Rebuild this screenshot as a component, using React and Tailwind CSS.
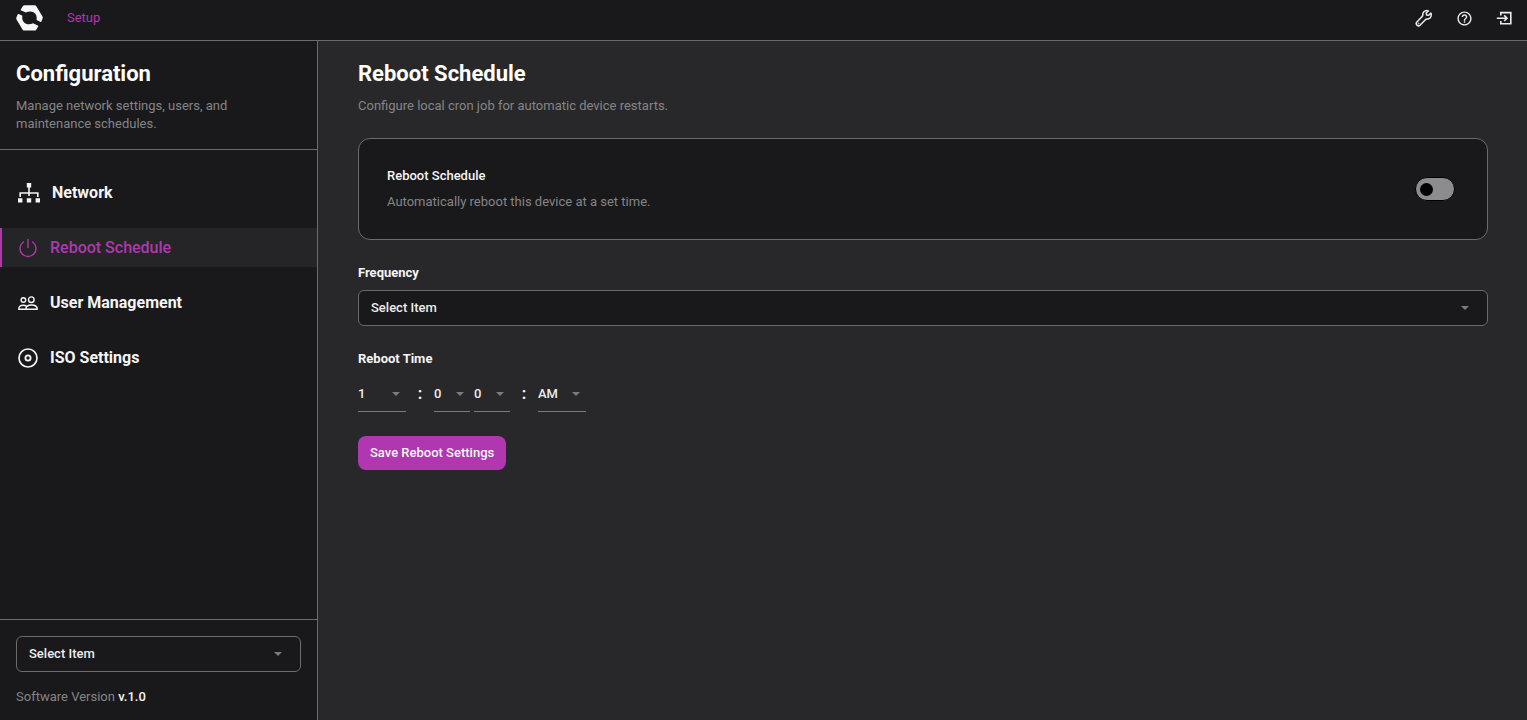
import React, { useState } from 'react';
import { MdHelpOutline } from 'react-icons/md';

const Logo = () => (
  <svg viewBox="0 0 27 26" className="h-[26px] w-[27px]" fill="#f7f7f7" aria-hidden="true">
    <path d="M4.8 4.4 6.6 1.4Q7.4.2 8.8.2H18.4Q19.8.2 20.5 1.4L26.5 11.4Q27 12.4 26.6 13.4L25.4 16.4Q25 17.2 24.2 16.8L20.6 15C21.2 11 19.6 8.2 17 7.1 14.6 6.1 12 6.5 10 7.6L5.2 5.6Q4.4 5.2 4.8 4.4Z" />
    <path d="M2.8 9 6.4 10.8C5.6 14.8 7.4 17.6 10 18.7 12.4 19.7 15 19.3 17 18.2L21.8 20.4Q22.6 20.8 22.2 21.6L20.4 24.4Q19.6 25.6 18.2 25.6H8.6Q7.2 25.6 6.5 24.4L.5 14.4Q0 13.4.4 12.4L1.6 9.6Q2 8.6 2.8 9Z" />
  </svg>
);

const WrenchIcon = () => (
  <svg viewBox="0 0 18 18" className="size-[18px]" fill="none" stroke="currentColor" strokeWidth="1.5" strokeLinejoin="round" aria-hidden="true">
    <path d="M15.9 4.1 13.6 6.2 11.5 5.9 11.2 4 13.4 1.9C11.4 1.1 8.8 2 8 4.2 7.6 5.4 7.8 6.2 7.6 7L1.9 12.9A2.3 2.3 0 0 0 5.2 16.1L10.9 10.2C11.8 9.9 12.6 10.2 13.7 9.8 15.9 9 16.8 6.3 15.9 4.1Z" />
    <circle cx="3.7" cy="14.4" r=".5" strokeWidth=".8" />
  </svg>
);

const EnterIcon = () => (
  <svg viewBox="0 0 16 16" className="size-4" fill="none" stroke="currentColor" strokeWidth="1.6" aria-hidden="true">
    <path d="M4.8 5.4V2.6H14.8V13.8H4.8V11M.8 8.2H11M8.2 5.4 11 8.2 8.2 11" />
  </svg>
);

const NetworkIcon = () => (
  <svg viewBox="0 0 22 20" className="h-5 w-[22px]" aria-hidden="true">
    <path d="M11 4V13M2.2 14V10H19.8V14" fill="none" stroke="currentColor" strokeWidth="1.6" />
    <path d="M8.8 0h4.4v4.4H8.8zM0 15.2h4.4v4.4H0zM8.8 15.2h4.4v4.4H8.8zM17.6 15.2H22v4.4h-4.4z" fill="currentColor" />
  </svg>
);

const PowerIcon = () => (
  <svg viewBox="0 0 20 20" className="size-5" fill="none" stroke="currentColor" strokeWidth="1.4" strokeLinecap="round" aria-hidden="true">
    <path d="M10 1.5V9.5M5.4 4A8 8 0 1 0 14.6 4" />
  </svg>
);

const PeopleIcon = () => (
  <svg viewBox="0 0 20 20" className="size-5" fill="none" stroke="currentColor" strokeWidth="1.4" strokeLinejoin="round" aria-hidden="true">
    <circle cx="5.4" cy="7" r="2.3" />
    <circle cx="13.3" cy="6.7" r="2.8" />
    <path d="M7.8 16.3H19.3C19.3 13.7 17 12 13.5 12S7.8 13.7 7.8 16.3ZM7.6 16.3H.7C.7 13.7 2.4 12.2 5.2 12.2 6.6 12.2 7.7 12.5 8.5 13.1" />
  </svg>
);

const DiscIcon = () => (
  <svg viewBox="0 0 20 20" className="size-5" fill="none" stroke="currentColor" aria-hidden="true">
    <circle cx="10" cy="10" r="9" strokeWidth="1.7" />
    <circle cx="10" cy="10" r="2.6" strokeWidth="1.8" />
  </svg>
);

const navItems = [
  { label: 'Network', icon: <NetworkIcon /> },
  { label: 'Reboot Schedule', icon: <PowerIcon /> },
  { label: 'User Management', icon: <PeopleIcon /> },
  { label: 'ISO Settings', icon: <DiscIcon /> },
];

const Caret = ({ className }) => (
  <svg
    viewBox="0 0 8 4"
    className={`pointer-events-none col-start-1 row-start-1 h-1 w-2 self-center justify-self-end fill-[#7b7b7d] ${className}`}
    aria-hidden="true"
  >
    <path d="M0 0h8L4 4z" />
  </svg>
);

const SelectBox = ({ id, label, options }) => (
  <div className="grid">
    <select
      id={id}
      aria-label={label}
      className="col-start-1 row-start-1 h-9 w-full appearance-none rounded-md border border-[#6b6b6d] bg-[#19191b] px-3 text-[13px] font-medium text-[#ececec]"
    >
      {options.map((o) => (
        <option key={o}>{o}</option>
      ))}
    </select>
    <Caret className="mr-[19px]" />
  </div>
);

const TimeSelect = ({ label, options, width }) => (
  <div className={`grid ${width}`}>
    <select
      aria-label={label}
      className="col-start-1 row-start-1 h-9 w-full appearance-none border-b border-[#7b7b7d] bg-transparent text-[13px] font-medium text-[#ececec]"
    >
      {options.map((o) => (
        <option key={o}>{o}</option>
      ))}
    </select>
    <Caret className="mr-1.5" />
  </div>
);

const range = (from, to) => Array.from({ length: to - from + 1 }, (_, i) => String(from + i));

export default function App() {
  const [active, setActive] = useState('Reboot Schedule');
  const [enabled, setEnabled] = useState(false);

  return (
    <div className="flex min-h-screen flex-col bg-[#28282a] font-['Roboto',sans-serif] text-[#f5f5f5]">
      {/* Top bar */}
      <header className="flex h-[41px] items-center border-b border-[#6b6b6d] bg-[#19191b] pr-[15px] pb-1 pl-4">
        <Logo />
        <a href="#setup" className="ml-6 text-[13px] text-[#b137b1]">
          Setup
        </a>
        <div className="ml-auto flex items-center gap-[23px] text-[#ececec]">
          <button type="button" aria-label="Tools">
            <WrenchIcon />
          </button>
          <button type="button" aria-label="Help">
            <MdHelpOutline className="size-[17px]" />
          </button>
          <button type="button" aria-label="Log out">
            <EnterIcon />
          </button>
        </div>
      </header>

      <div className="flex flex-1">
        {/* Sidebar */}
        <aside className="flex w-[318px] shrink-0 flex-col border-r border-[#6b6b6d] bg-[#19191b]">
          <div className="border-b border-[#6b6b6d] p-4">
            <h1 className="text-[22px] leading-[33px] font-bold text-white">Configuration</h1>
            <p className="mt-[7px] max-w-60 text-[13px] leading-[18px] text-[#858587]">
              Manage network settings, users, and maintenance schedules.
            </p>
          </div>

          <nav className="flex flex-col gap-4 py-[23px]">
            {navItems.map((item) => (
              <button
                key={item.label}
                type="button"
                onClick={() => setActive(item.label)}
                className={`flex h-[39px] items-center gap-3 border-l-2 px-4 text-base ${
                  item.label === active
                    ? 'border-[#b137b1] bg-[#252527] font-medium text-[#b137b1]'
                    : 'border-transparent font-bold'
                }`}
              >
                {item.icon}
                {item.label}
              </button>
            ))}
          </nav>

          <div className="mt-auto border-t border-[#6b6b6d] px-4 pt-4 pb-3.5">
            <SelectBox label="Device" options={['Select Item']} />
            <p className="mt-4 text-[13px] leading-[18px] text-[#858587]">
              Software Version <span className="font-medium text-[#f5f5f5]">v.1.0</span>
            </p>
          </div>
        </aside>

        {/* Page content */}
        <main className="min-w-0 flex-1 pt-4 pr-[39px] pl-10">
          <h2 className="text-[22px] leading-[33px] font-bold text-white">Reboot Schedule</h2>
          <p className="mt-[7px] text-[13px] leading-[18px] text-[#858587]">
            Configure local cron job for automatic device restarts.
          </p>

          <section className="mt-[23px] flex items-center justify-between rounded-xl border border-[#6b6b6d] bg-[#19191b] py-7 pr-8 pl-7">
            <div>
              <label htmlFor="reboot-enabled" className="block text-[13px] leading-[18px] font-medium">
                Reboot Schedule
              </label>
              <p className="mt-2 text-[13px] leading-[18px] text-[#858587]">
                Automatically reboot this device at a set time.
              </p>
            </div>
            <input
              id="reboot-enabled"
              type="checkbox"
              role="switch"
              checked={enabled}
              onChange={(e) => setEnabled(e.target.checked)}
              className="flex h-6 w-10 appearance-none items-center rounded-full border border-black bg-[#8c8c8e] px-1 before:size-[13px] before:rounded-full before:bg-black checked:justify-end checked:bg-[#b137b1]"
            />
          </section>

          <label htmlFor="frequency" className="mt-6 mb-2 block text-[13px] leading-[18px] font-bold">
            Frequency
          </label>
          <SelectBox id="frequency" options={['Select Item', 'Daily', 'Weekly', 'Monthly']} />

          <fieldset className="mt-6">
            <legend className="text-[13px] leading-[18px] font-bold">Reboot Time</legend>
            <div className="mt-2 flex items-center">
              <TimeSelect label="Hour" options={range(1, 12)} width="w-12" />
              <span className="w-7 text-center text-base font-bold">:</span>
              <TimeSelect label="Minute, tens" options={range(0, 5)} width="w-9" />
              <span className="w-1" />
              <TimeSelect label="Minute, ones" options={range(0, 9)} width="w-9" />
              <span className="w-7 text-center text-base font-bold">:</span>
              <TimeSelect label="AM or PM" options={['AM', 'PM']} width="w-12" />
            </div>
          </fieldset>

          <button
            type="button"
            className="mt-6 h-[34px] rounded-lg bg-[#b137b1] px-3 text-[13px] font-medium text-[#f5f5f5]"
          >
            Save Reboot Settings
          </button>
        </main>
      </div>
    </div>
  );
}
